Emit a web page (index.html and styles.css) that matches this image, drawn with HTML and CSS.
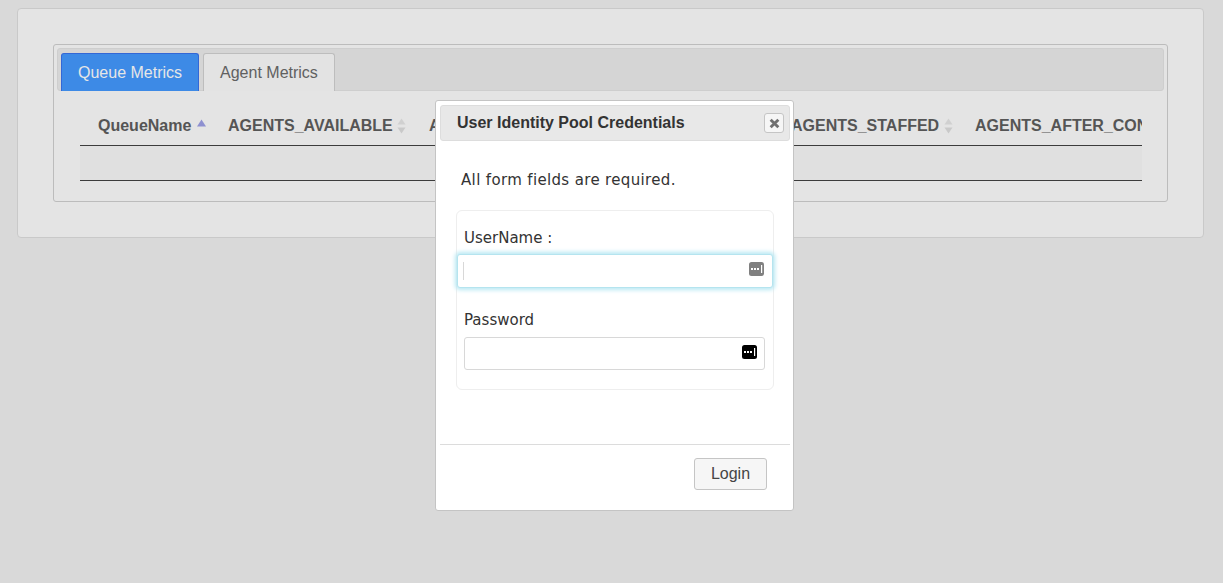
FILE: index.html
```html
<!DOCTYPE html>
<html lang="en">
<head>
<meta charset="utf-8">
<title>Metrics</title>
<link rel="stylesheet" href="styles.css">
</head>
<body>
<svg class="defs" width="0" height="0" aria-hidden="true">
  <symbol id="sort-both" viewBox="0 0 8 16"><path d="M4 0.5 8 6.5H0Z" fill="#d0d0d0"/><path d="M0 9.5H8L4 15.5Z" fill="#c9c9c9"/></symbol>
  <symbol id="sort-up" viewBox="0 0 9 8"><path d="M4.5 0.5 9 7.5H0Z" fill="#8e90d0"/></symbol>
  <symbol id="cred" viewBox="0 0 15 14"><rect width="15" height="14" rx="2.5" fill="currentColor"/><path d="M2 6h2v2H2zM5 6h2v2H5zM8 6h2v2H8z" fill="#fff"/><rect x="12" y="3" width="1.2" height="8" fill="#fff"/></symbol>
</svg>
<main class="card">
  <section class="panel">
    <nav class="tabs">
      <a class="tab tab-active">Queue Metrics</a>
      <a class="tab">Agent Metrics</a>
    </nav>
    <div class="table-wrap">
      <table class="metrics">
        <colgroup><col class="c1"><col class="c2"><col class="c3"><col class="c4"><col class="c5"><col class="c6"></colgroup>
        <thead>
          <tr>
            <th>QueueName <svg class="sort-up"><use href="#sort-up"/></svg></th>
            <th>AGENTS_AVAILABLE <svg class="sort"><use href="#sort-both"/></svg></th>
            <th>AGENTS_ONLINE <svg class="sort"><use href="#sort-both"/></svg></th>
            <th>AGENTS_ON_CALL <svg class="sort"><use href="#sort-both"/></svg></th>
            <th>AGENTS_STAFFED <svg class="sort"><use href="#sort-both"/></svg></th>
            <th>AGENTS_AFTER_CONTACT_WORK</th>
          </tr>
        </thead>
        <tbody>
          <tr><td colspan="6"></td></tr>
        </tbody>
      </table>
    </div>
  </section>
</main>
<div class="dialog" role="dialog">
  <header class="dialog-title">
    <span>User Identity Pool Credentials</span>
    <button class="close" aria-label="Close"><svg viewBox="0 0 10 10" width="11" height="11"><path d="M1.5 1.5 8.5 8.5M8.5 1.5 1.5 8.5" stroke="#707070" stroke-width="2.6"/></svg></button>
  </header>
  <div class="dialog-body">
    <p class="note">All form fields are required.</p>
    <form class="fieldset">
      <label class="label label-first" for="u">UserName :</label>
      <div class="field field-focus">
        <input id="u" class="input" type="text">
        <span class="caret"></span>
        <svg class="cred cred-grey"><use href="#cred"/></svg>
      </div>
      <label class="label" for="p">Password</label>
      <div class="field">
        <input id="p" class="input" type="password">
        <svg class="cred"><use href="#cred"/></svg>
      </div>
    </form>
  </div>
  <footer class="dialog-foot">
    <button class="login">Login</button>
  </footer>
</div>
</body>
</html>
```
FILE: styles.css
```css
* { box-sizing: border-box; }
html, body { height: 100%; }
body {
  margin: 0;
  padding: 8px 19px 0 17px;
  background: #d9d9d9;
  font-family: "Liberation Sans", Arial, sans-serif;
  overflow: hidden;
}
.defs { position: absolute; }
.card {
  height: 230px;
  padding: 35px;
  background: #e4e4e4;
  border: 1px solid #c9c9c9;
  border-radius: 4px;
}
.panel {
  height: 158px;
  padding: 3px 3px 0 3px;
  border: 1px solid #bcbcbc;
  border-radius: 3px;
}
.tabs {
  display: flex;
  gap: 4px;
  height: 43px;
  padding: 4px 3px 0;
  background: #d5d5d5;
  border: 1px solid #cecece;
  border-radius: 3px;
}
.tab {
  display: flex;
  align-items: center;
  height: 38px;
  padding: 0 16px;
  font-size: 16px;
  color: #606060;
  background: #e3e3e3;
  border: 1px solid #bdbdbd;
  border-bottom: 0;
  border-radius: 3px 3px 0 0;
}
.tab-active {
  color: #e6e6e6;
  background: #3d8ae6;
  border-color: #3367d6;
}
.table-wrap {
  width: 1062px;
  margin-left: 23px;
  overflow: hidden;
}
.metrics {
  width: 1300px;
  table-layout: fixed;
  border-collapse: collapse;
}
.c1 { width: 130px; }
.c2 { width: 201px; }
.c3 { width: 180px; }
.c4 { width: 182px; }
.c5 { width: 184px; }
.c6 { width: 423px; }
.metrics th {
  height: 54px;
  padding: 16px 0 0 18px;
  text-align: left;
  font-size: 16px;
  font-weight: 700;
  color: #555;
  white-space: nowrap;
  border-bottom: 1px solid #3c3c3c;
}
.metrics td {
  height: 35px;
  padding: 0;
  background: #e0e0e0;
  border-bottom: 1px solid #3c3c3c;
}
.sort { width: 9px; height: 16px; margin-left: 0; vertical-align: -3px; }
.sort-up { width: 9px; height: 8px; margin-left: 1px; vertical-align: 4px; }
.dialog {
  position: absolute;
  left: 435px;
  top: 100px;
  width: 359px;
  height: 411px;
  display: flex;
  flex-direction: column;
  padding: 4px;
  background: #fff;
  border: 1px solid #c4c4c4;
  border-radius: 3px;
}
.dialog-title {
  display: flex;
  align-items: center;
  justify-content: space-between;
  flex: none;
  width: 350px;
  height: 36px;
  padding: 0 5px 0 16px;
  font-size: 16px;
  font-weight: 700;
  color: #333;
  background: #e8e8e8;
  border: 1px solid #ddd;
  border-radius: 3px;
}
.close {
  display: flex;
  align-items: center;
  justify-content: center;
  width: 20px;
  height: 20px;
  padding: 0;
  background: #f6f6f6;
  border: 1px solid #c5c5c5;
  border-radius: 3px;
}
.dialog-body {
  flex: 1;
  padding: 0 16px;
}
.note {
  margin: 29px 0 20px 5px;
  font-family: "DejaVu Sans", sans-serif;
  font-size: 15px;
  letter-spacing: 0.35px;
  line-height: 20px;
  color: #333;
}
.fieldset {
  width: 318px;
  height: 180px;
  padding: 0 8px 0 7px;
  background: #fff;
  border: 1px solid #eeeeee;
  border-radius: 6px;
}
.label {
  display: block;
  margin: 22px 0 7px;
  font-family: "DejaVu Sans", sans-serif;
  font-size: 15px;
  line-height: 20px;
  color: #333;
}
.label-first { margin: 17px 0 6px; }
.field {
  position: relative;
  height: 33px;
}
.input {
  display: block;
  width: 100%;
  height: 100%;
  padding: 0 6px;
  background: #fff;
  border: 1px solid #d8d8d8;
  border-radius: 3px;
  outline: 0;
}
.field-focus { margin: 0 -8px 0 -7px; height: 34px; }
.field-focus .input {
  border-color: #b5e4ef;
  box-shadow: 0 0 4px 2px #b8e8f3;
}
.caret {
  position: absolute;
  left: 6px;
  top: 8px;
  width: 1px;
  height: 18px;
  background: #d8d8d8;
}
.cred {
  position: absolute;
  right: 8px;
  top: 8px;
  width: 15px;
  height: 14px;
  color: #000;
}
.cred-grey { right: 9px; top: 8px; color: #808080; }
.dialog-foot {
  display: flex;
  justify-content: flex-end;
  flex: none;
  width: 350px;
  height: 62px;
  padding: 13px 23px 0 0;
  border-top: 1px solid #dcdcdc;
}
.login {
  width: 73px;
  height: 32px;
  padding: 0;
  font-family: "Liberation Sans", Arial, sans-serif;
  font-size: 16px;
  color: #454545;
  background: #f6f6f6;
  border: 1px solid #c5c5c5;
  border-radius: 3px;
}
```
